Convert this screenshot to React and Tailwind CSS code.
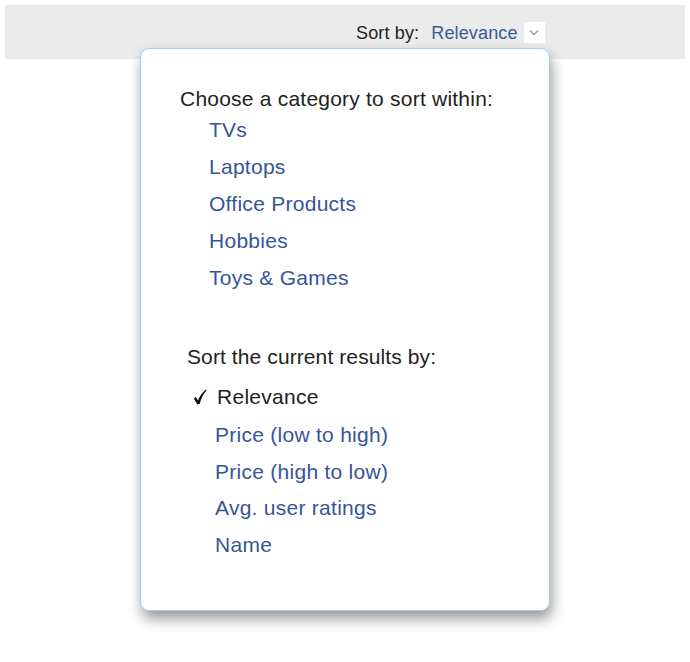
export default function App() {
  const cats = ["TVs", "Laptops", "Office Products", "Hobbies", "Toys & Games"];
  const sorts = ["Price (low to high)", "Price (high to low)", "Avg. user ratings", "Name"];
  return (
    <div className="w-[690px] h-[662px] bg-white relative" style={{ fontFamily: '"Liberation Sans", Arial, sans-serif' }}>
      <div className="pt-[5px] px-[5px]">
        <div className="h-[54px] bg-[#ebebeb] flex items-start">
          <div className="ml-[351px] mt-[17px] flex items-center text-[18px] leading-[20px] tracking-[0.15px]">
            <span className="text-[#222]">Sort by:</span>
            <span className="ml-[12px] text-[#3b5998]">Relevance</span>
            <span className="ml-[6px] w-[21px] h-[21px] bg-white flex items-center justify-center">
              <svg width="10" height="7" viewBox="0 0 10 7"><path d="M1 1.5 L5 5.5 L9 1.5" fill="none" stroke="#9a9a9a" strokeWidth="1.3" /></svg>
            </span>
          </div>
        </div>
      </div>
      <div className="absolute left-[140px] top-[48px] w-[410px] h-[563px] bg-white border border-[#a9cbec] rounded-[9px] shadow-[2px_8px_14px_rgba(0,0,0,0.4)]">
        <div className="pl-[39px] pt-[38px] text-[21px] leading-[24px] tracking-[0.22px] text-[#222]">Choose a category to sort within:</div>
        <div className="pl-[68px] mt-[0px] flex flex-col text-[21px] leading-[37px] tracking-[0.27px] text-[#36559a]">
          {cats.map((c) => (<div key={c}>{c}</div>))}
        </div>
        <div className="pl-[46px] mt-[49px] text-[21px] leading-[24px] tracking-[0.1px] text-[#222]">Sort the current results by:</div>
        <div className="pl-[52px] mt-[15px] flex items-center text-[21px] leading-[26px] tracking-[0.27px] text-[#222]">
          <span className="w-[24px] flex items-center">
            <svg width="14" height="16" viewBox="0 0 14 16">
              <path d="M0.8 9.4 L2.8 8 L5 11.4 C7 6.8 9.5 3.4 13 0.6 L13.6 1.4 C10.6 4.6 8.4 8.6 6.6 15 L4.2 15.3 Z" fill="#111" />
            </svg>
          </span>
          <span>Relevance</span>
        </div>
        <div className="pl-[74px] mt-[7px] flex flex-col text-[21px] leading-[36.7px] tracking-[0.27px] text-[#36559a]">
          {sorts.map((c) => (<div key={c}>{c}</div>))}
        </div>
      </div>
    </div>
  );
}
